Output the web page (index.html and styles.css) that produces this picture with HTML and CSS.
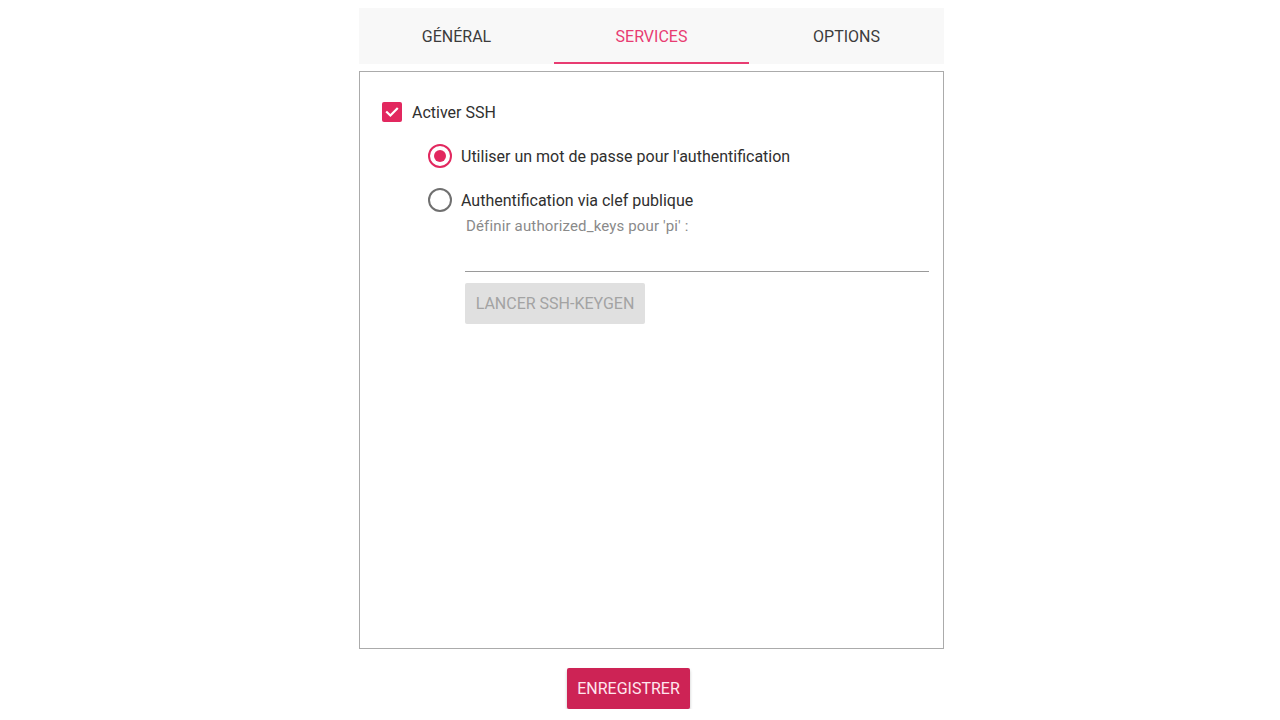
FILE: index.html
```html
<!DOCTYPE html>
<html lang="fr">
<head>
<meta charset="utf-8">
<link rel="stylesheet" href="styles.css">
</head>
<body>
<div class="page">
  <div class="tabs">
    <div class="tab">GÉNÉRAL</div>
    <div class="tab active">SERVICES</div>
    <div class="tab">OPTIONS</div>
  </div>
  <div class="panel">
    <div class="check-row">
      <span class="checkbox">
        <svg width="20" height="20" viewBox="0 0 20 20"><path d="M5 10.2 L8.4 13.5 L15 6.8" fill="none" stroke="#fff" stroke-width="2.2" stroke-linecap="square"/></svg>
      </span>
      <span class="label">Activer SSH</span>
    </div>
    <div class="options">
      <div class="radio-row">
        <span class="radio checked"><span class="dot"></span></span>
        <span class="label">Utiliser un mot de passe pour l'authentification</span>
      </div>
      <div class="radio-row">
        <span class="radio"></span>
        <span class="label">Authentification via clef publique</span>
      </div>
      <div class="keys">
        <div class="hint">Définir authorized_keys pour 'pi' :</div>
        <div class="field"></div>
        <div class="keygen">LANCER SSH-KEYGEN</div>
      </div>
    </div>
  </div>
  <div class="footer">
    <div class="save">ENREGISTRER</div>
  </div>
</div>
</body>
</html>
```
FILE: styles.css
```css
html, body {
  margin: 0;
  padding: 0;
  background: #ffffff;
  font-family: Roboto, "Liberation Sans", sans-serif;
}
.page {
  width: 585px;
  margin-left: 359px;
  padding-top: 8px;
}
.tabs {
  display: flex;
  height: 56px;
  background: #f8f8f8;
}
.tab {
  flex: 1;
  display: flex;
  align-items: center;
  justify-content: center;
  font-size: 16px;
  color: #3c3c3c;
  padding-top: 3px;
  box-sizing: border-box;
  border-bottom: 2px solid transparent;
}
.tab.active {
  color: #e83c72;
  border-bottom-color: #e83c72;
}
.panel {
  margin-top: 7px;
  height: 578px;
  border: 1px solid #ababab;
  box-sizing: border-box;
  padding: 30px 22px 0 22px;
}
.check-row {
  display: flex;
  align-items: center;
  gap: 10px;
  height: 20px;
}
.checkbox {
  width: 20px;
  height: 20px;
  border-radius: 2px;
  background: #e2285f;
  display: block;
}
.checkbox svg { display: block; }
.label {
  font-size: 16px;
  color: #2f2f2f;
}
.options {
  padding-left: 46px;
  margin-top: 22px;
  display: flex;
  flex-direction: column;
  gap: 20px;
}
.radio-row {
  display: flex;
  align-items: center;
  gap: 9px;
  height: 24px;
}
.radio {
  width: 24px;
  height: 24px;
  box-sizing: border-box;
  border: 2px solid #707070;
  border-radius: 50%;
  display: flex;
  align-items: center;
  justify-content: center;
}
.radio.checked {
  border-color: #e2285f;
}
.dot {
  width: 12px;
  height: 12px;
  border-radius: 50%;
  background: #e2285f;
}
.keys {
  margin-top: -15px;
  padding-left: 37px;
  display: flex;
  flex-direction: column;
}
.hint {
  font-size: 15px;
  letter-spacing: 0.15px;
  padding-left: 1px;
  color: #8a8a8a;
  line-height: 18px;
}
.field {
  margin-top: 36px;
  height: 1px;
  background: #9a9a9a;
  width: 464px;
}
.keygen {
  margin-top: 11px;
  width: 180px;
  height: 41px;
  background: #e0e0e0;
  color: #a3a3a3;
  font-size: 16px;
  display: flex;
  align-items: center;
  justify-content: center;
  border-radius: 2px;
}
.footer {
  margin-top: 19px;
  padding-left: 208px;
}
.save {
  width: 123px;
  height: 41px;
  background: #cd2355;
  color: #ffe6ee;
  font-size: 16px;
  display: flex;
  align-items: center;
  justify-content: center;
  border-radius: 2px;
  box-shadow: 0 2px 3px rgba(0,0,0,0.25);
}
```
